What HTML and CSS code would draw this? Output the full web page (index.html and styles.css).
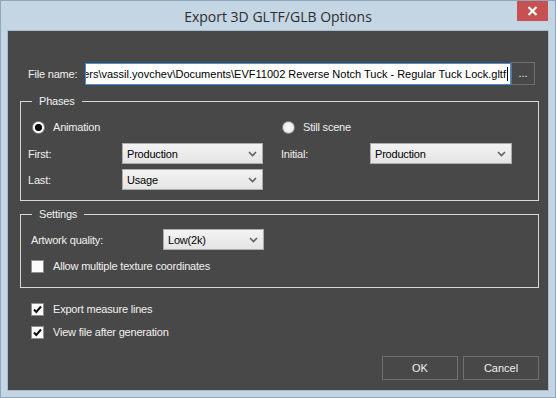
FILE: index.html
```
<!DOCTYPE html>
<html lang="en">
<head>
    <meta charset="UTF-8">
    <meta name="viewport" content="width=device-width, initial-scale=1.0">
    <title>Export 3D GLTF/GLB Options</title>
    <link rel="stylesheet" href="styles.css">
</head>
<body>
    <div class="window">
        <div class="titlebar">
            <span class="title">Export 3D GLTF/GLB Options</span>
            <button class="close">
                <svg width="11" height="10" viewBox="0 0 11 10">
                    <path d="M1.5 1 L9.5 9 M9.5 1 L1.5 9" stroke="#fff" stroke-width="2.2"/>
                </svg>
            </button>
        </div>

        <div class="client">
            <div class="file-row">
                <label class="file-label">File name:</label>
                <div class="textbox">
                    <span class="path">C:\Users\vassil.yovchev\Documents\EVF11002 Reverse Notch Tuck - Regular Tuck Lock.gltf</span>
                    <span class="caret"></span>
                </div>
                <button class="browse">...</button>
            </div>

            <fieldset class="group phases">
                <legend>Phases</legend>
                <div class="phase-cols">
                    <div class="phase-col col-left">
                        <div class="radio-row"><span class="radio checked"></span>Animation</div>
                        <div class="field-row">
                            <span class="field-label">First:</span>
                            <div class="combo">Production
                                <svg class="chev" width="9" height="6" viewBox="0 0 9 6"><path d="M1 1 L4.5 4.5 L8 1" fill="none" stroke="#606060" stroke-width="1.6"/></svg>
                            </div>
                        </div>
                        <div class="field-row">
                            <span class="field-label">Last:</span>
                            <div class="combo">Usage
                                <svg class="chev" width="9" height="6" viewBox="0 0 9 6"><path d="M1 1 L4.5 4.5 L8 1" fill="none" stroke="#606060" stroke-width="1.6"/></svg>
                            </div>
                        </div>
                    </div>
                    <div class="phase-col col-right">
                        <div class="radio-row"><span class="radio"></span>Still scene</div>
                        <div class="field-row">
                            <span class="field-label">Initial:</span>
                            <div class="combo">Production
                                <svg class="chev" width="9" height="6" viewBox="0 0 9 6"><path d="M1 1 L4.5 4.5 L8 1" fill="none" stroke="#606060" stroke-width="1.6"/></svg>
                            </div>
                        </div>
                    </div>
                </div>
            </fieldset>

            <fieldset class="group settings">
                <legend>Settings</legend>
                <div class="settings-body">
                    <div class="quality-row">
                        <span class="quality-label">Artwork quality:</span>
                        <div class="combo quality">Low(2k)
                            <svg class="chev" width="9" height="6" viewBox="0 0 9 6"><path d="M1 1 L4.5 4.5 L8 1" fill="none" stroke="#606060" stroke-width="1.6"/></svg>
                        </div>
                    </div>
                    <div class="check-row"><span class="check"></span>Allow multiple texture coordinates</div>
                </div>
            </fieldset>

            <div class="check-row outer">
                <span class="check">
                    <svg width="11" height="11" viewBox="0 0 11 11"><path d="M2 5.5 L4.3 8 L9 2.5" fill="none" stroke="#111" stroke-width="2"/></svg>
                </span>Export measure lines
            </div>
            <div class="check-row outer second">
                <span class="check">
                    <svg width="11" height="11" viewBox="0 0 11 11"><path d="M2 5.5 L4.3 8 L9 2.5" fill="none" stroke="#111" stroke-width="2"/></svg>
                </span>View file after generation
            </div>

            <div class="button-row">
                <button class="btn">OK</button>
                <button class="btn">Cancel</button>
            </div>
        </div>
    </div>
</body>
</html>
```

FILE: styles.css
```
* {
    box-sizing: border-box;
}

body {
    margin: 0;
    padding: 0;
    font-family: 'Liberation Sans', Arial, sans-serif;
    font-size: 11px;
    letter-spacing: -0.2px;
}

.window {
    width: 556px;
    height: 398px;
    border: 1px solid #8fa7be;
    background-color: #c4d5e4;
    padding: 0 7px 7px;
    display: flex;
    flex-direction: column;
}

.titlebar {
    position: relative;
    height: 30px;
    margin: 0 -7px;
    display: flex;
    align-items: center;
    justify-content: center;
}

.title {
    font-family: 'Open Sans', 'Noto Sans', sans-serif;
    font-size: 14px;
    letter-spacing: 0;
    color: #2e2e2e;
    padding-top: 1px;
}

.close {
    position: absolute;
    top: 0;
    right: 7px;
    width: 31px;
    height: 20px;
    border: none;
    padding: 0;
    background-color: #c75050;
    display: flex;
    align-items: center;
    justify-content: center;
}

.client {
    flex: 1;
    background-color: #484848;
    box-shadow: 0 0 0 1px #a9bccd;
    padding: 0 9px 10px 12px;
    display: flex;
    flex-direction: column;
    color: #f0f0f0;
}

.file-row {
    margin-top: 31px;
    padding-left: 8px;
    height: 23px;
    display: flex;
    align-items: center;
}

.file-label {
    width: 57px;
}

.textbox {
    width: 426px;
    height: 22px;
    border: 1px solid #3f8fe0;
    background-color: #fff;
    color: #000;
    letter-spacing: 0;
    display: flex;
    align-items: center;
    justify-content: flex-end;
    overflow: hidden;
    white-space: nowrap;
    padding-right: 2px;
}

.caret {
    flex: none;
    width: 1px;
    height: 14px;
    margin-left: 1px;
    background-color: #000;
}

.browse {
    width: 24px;
    height: 23px;
    border: 1px solid #6e6e6e;
    background-color: #484848;
    color: #f0f0f0;
    font-family: inherit;
    font-size: 11px;
    padding: 0 0 2px;
}

.group {
    margin: 0;
    padding: 0;
    min-width: 0;
    border: 1px solid #d8d8d8;
}

.group legend {
    margin-left: 11px;
    padding: 0 7px;
    line-height: 14px;
    font-size: 11px;
}

.phases {
    margin-top: 9px;
}

.phase-cols {
    display: flex;
    padding: 12px 0 10px 7px;
}

.col-left {
    width: 253px;
}

.radio-row {
    height: 14px;
    display: flex;
    align-items: center;
}

.col-left .radio-row {
    padding-left: 4px;
}

.col-right .radio-row {
    padding-left: 1px;
}

.radio {
    width: 13px;
    height: 13px;
    margin-right: 8px;
    border-radius: 50%;
    border: 1px solid #8c8c8c;
    background: radial-gradient(circle, #fdfdfd 0, #e6e6e6 6px);
}

.radio.checked {
    background: radial-gradient(circle, #0d0d0d 0 3.3px, #fff 4px);
}

.field-row {
    display: flex;
    align-items: center;
    margin-top: 5px;
}

.radio-row + .field-row {
    margin-top: 9px;
}

.col-left .field-label {
    width: 94px;
}

.col-right .field-label {
    width: 89px;
}

.combo {
    width: 141px;
    height: 21px;
    border: 1px solid #acacac;
    background: linear-gradient(#f3f3f3, #e4e4e4);
    color: #000;
    padding: 0 5px 0 4px;
    display: flex;
    align-items: center;
}

.col-right .combo {
    width: 142px;
}

.chev {
    margin-left: auto;
}

.settings {
    margin-top: 6px;
}

.settings-body {
    padding: 8px 0 14px 10px;
}

.quality-row {
    display: flex;
    align-items: center;
}

.quality-label {
    width: 132px;
}

.combo.quality {
    width: 101px;
}

.check-row {
    height: 14px;
    display: flex;
    align-items: center;
    margin-top: 9px;
}

.check-row.outer {
    margin-top: 14px;
    padding-left: 11px;
}

.check-row.outer.second {
    margin-top: 9px;
}

.check {
    width: 13px;
    height: 13px;
    margin-right: 9px;
    border: 1px solid #8f8f8f;
    background-color: #fcfcfc;
    display: flex;
    align-items: center;
    justify-content: center;
}

.button-row {
    margin-top: auto;
    display: flex;
    justify-content: flex-end;
    gap: 5px;
}

.btn {
    width: 76px;
    height: 24px;
    border: 1px solid #707070;
    background-color: #484848;
    color: #f0f0f0;
    font-family: inherit;
    font-size: 11px;
    padding: 0;
}
```
